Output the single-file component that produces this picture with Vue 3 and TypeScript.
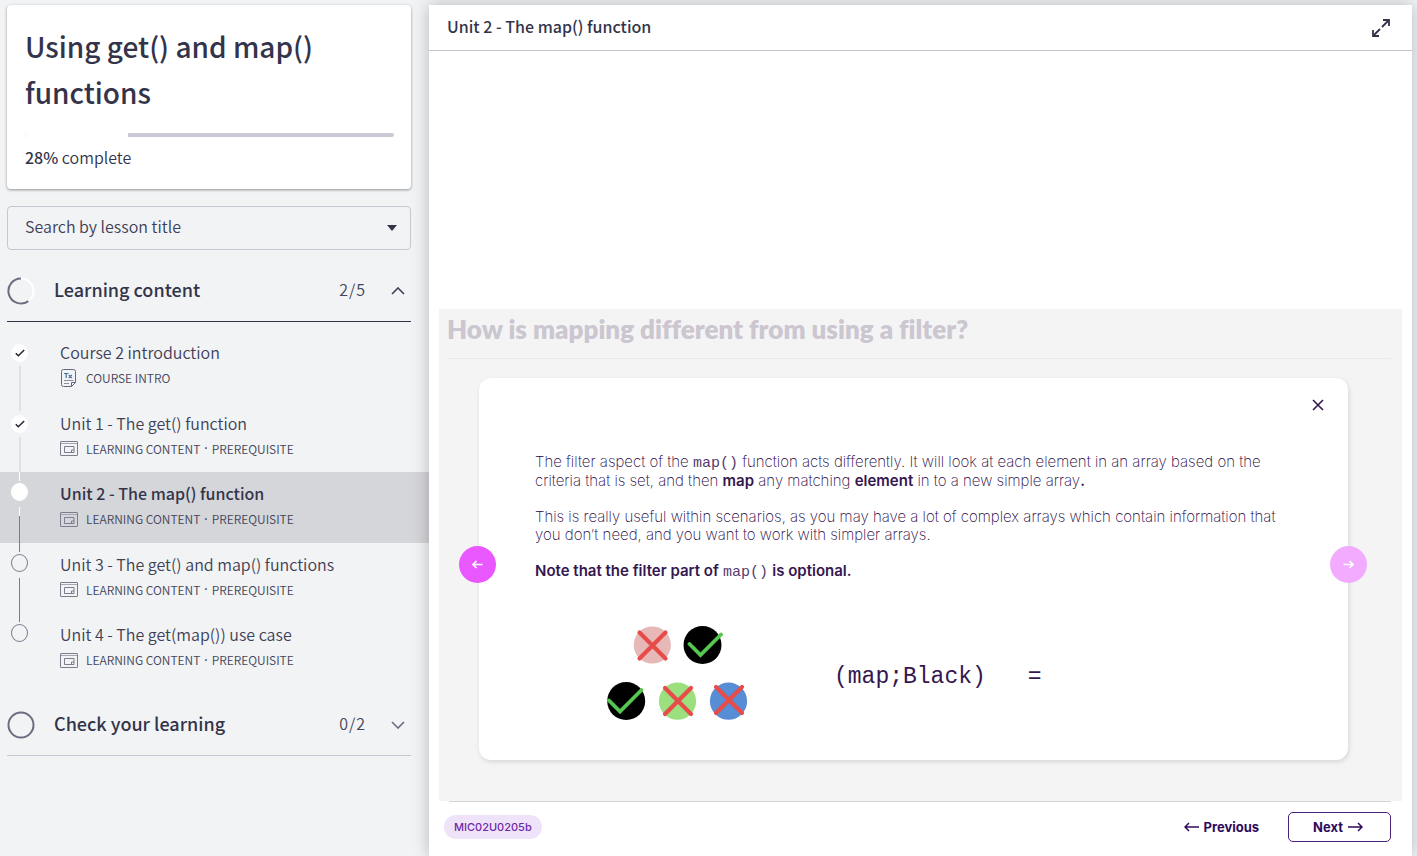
<script setup lang="ts">
import { ref } from 'vue'

type Status = 'done' | 'current' | 'todo'

interface Lesson {
  title: string
  meta: string[]
  icon: 'text' | 'slides'
  status: Status
}

const progress = ref(28)
const search = ref('')

const lessons: Lesson[] = [
  { title: 'Course 2 introduction', meta: ['COURSE INTRO'], icon: 'text', status: 'done' },
  { title: 'Unit 1 - The get() function', meta: ['LEARNING CONTENT', 'PREREQUISITE'], icon: 'slides', status: 'done' },
  { title: 'Unit 2 - The map() function', meta: ['LEARNING CONTENT', 'PREREQUISITE'], icon: 'slides', status: 'current' },
  { title: 'Unit 3 - The get() and map() functions', meta: ['LEARNING CONTENT', 'PREREQUISITE'], icon: 'slides', status: 'todo' },
  { title: 'Unit 4 - The get(map()) use case', meta: ['LEARNING CONTENT', 'PREREQUISITE'], icon: 'slides', status: 'todo' },
]
</script>

<template>
  <div class="page">
    <aside class="sidebar">
      <section class="course">
        <h1>Using get() and map() functions</h1>
        <div class="bar" role="progressbar" aria-label="Course progress" :aria-valuenow="progress">
          <div class="bar-done" :style="{ width: progress + '%' }"></div>
        </div>
        <p class="complete"><strong>{{ progress }}%</strong> complete</p>
      </section>

      <div class="search">
        <select v-model="search" aria-label="Search by lesson title">
          <option value="">Search by lesson title</option>
          <option v-for="l in lessons" :key="l.title" :value="l.title">{{ l.title }}</option>
        </select>
        <svg class="caret" width="10" height="6" viewBox="0 0 10 6"><path d="M0 0h10L5 6z" fill="#33344a" /></svg>
      </div>

      <button type="button" class="section open" aria-expanded="true">
        <svg class="ring" width="28" height="28" viewBox="0 0 28 28" fill="none" stroke-width="2">
          <circle cx="14" cy="14" r="12.500" stroke="#fff" />
          <path d="M14 1.500A12.500 12.500 0 1 0 21.300 24.100" stroke="#6c6c80" />
        </svg>
        <span class="section-name">Learning content</span>
        <span class="count">2/5</span>
        <svg width="14" height="8" viewBox="0 0 14 8" fill="none" stroke="#3f4055" stroke-width="1.600"><path d="M1 7l6-6 6 6" /></svg>
      </button>

      <ul class="lessons">
        <li v-for="(l, i) in lessons" :key="l.title" :class="['lesson', l.status]">
          <div class="rail">
            <span :class="['seg', 'before', { hidden: i === 0 }]"></span>
            <span class="dot">
              <svg v-if="l.status === 'done'" width="10" height="8" viewBox="0 0 10 8" fill="none" stroke="#222230" stroke-width="1.500"><path d="M.8 4.200l2.500 2.500L9.200 1" /></svg>
            </span>
            <span :class="['seg', 'after', { hidden: i === lessons.length - 1 }]"></span>
          </div>
          <div class="lesson-text">
            <a href="#" class="lesson-title">{{ l.title }}</a>
            <div class="meta">
              <svg v-if="l.icon === 'text'" width="18" height="18" viewBox="0 0 18 18" fill="none" stroke="#66677c">
                <path d="M3.500.5h10a2 2 0 0 1 2 2v11l-4 4h-8a2 2 0 0 1-2-2v-13a2 2 0 0 1 2-2z" />
                <path d="M15.500 13.500h-4v4" />
                <path d="M4 11.500h9.500M4 14.500h5" stroke="#8e8f9f" />
                <path d="M4 4.500h4.500M6.200 4.500V9M8.800 6l3 3M11.800 6l-3 3" stroke="#46719c" stroke-width="1.200" />
              </svg>
              <svg v-else width="18" height="15" viewBox="0 0 18 15" fill="none" stroke="#7b7c8e">
                <rect x=".5" y=".5" width="17" height="14" rx=".5" />
                <path d="M1 2.500h16" stroke="#a5a6b2" />
                <path d="M4.500 5.500h9.500v6h-9.500z" />
                <path d="M14 9h-2.500v2.500" />
              </svg>
              <template v-for="(m, k) in l.meta" :key="m">
                <span v-if="k > 0" class="sep">·</span>
                <span class="kind">{{ m }}</span>
              </template>
            </div>
          </div>
        </li>
      </ul>

      <button type="button" class="section" aria-expanded="false">
        <svg class="ring" width="28" height="28" viewBox="0 0 28 28" fill="none" stroke="#6c6c80" stroke-width="2"><circle cx="14" cy="14" r="12.500" /></svg>
        <span class="section-name">Check your learning</span>
        <span class="count">0/2</span>
        <svg width="14" height="8" viewBox="0 0 14 8" fill="none" stroke="#6c6c80" stroke-width="1.600"><path d="M1 1l6 6 6-6" /></svg>
      </button>
    </aside>

    <main class="viewer">
      <header class="topbar">
        <h2>Unit 2 - The map() function</h2>
        <button type="button" class="plain" aria-label="Full screen">
          <svg width="18" height="18" viewBox="0 0 18 18" fill="none" stroke="#33344a" stroke-width="1.800">
            <path d="M10 8l6.500-6.500M11 1h6v6M8 10l-6.500 6.500M1 11v6h6" />
          </svg>
        </button>
      </header>

      <div class="stage">
        <section class="slide">
          <h3>How is mapping different from using a filter?</h3>
          <article class="panel">
            <button type="button" class="round prev" aria-label="Previous step">
              <svg width="11" height="9" viewBox="0 0 11 9" fill="none" stroke="#fff" stroke-width="1.700"><path d="M10.500 4.500H1M4.500 1L1 4.500 4.500 8" /></svg>
            </button>
            <button type="button" class="round next" aria-label="Next step">
              <svg width="11" height="9" viewBox="0 0 11 9" fill="none" stroke="#fff" stroke-width="1.700"><path d="M.5 4.500H10M6.500 1L10 4.500 6.500 8" /></svg>
            </button>
            <div class="panel-head">
              <button type="button" class="plain" aria-label="Close">
                <svg width="12" height="12" viewBox="0 0 12 12" stroke="#35174f" stroke-width="1.600"><path d="M1 1l10 10M11 1L1 11" /></svg>
              </button>
            </div>
            <div class="copy">
              <p>The filter aspect of the <code>map()</code> function acts differently. It will look at each element in an array based on the criteria that is set, and then <b>map</b> any matching <b>element</b> in to a new simple array<b>.</b></p>
              <p>This is really useful within scenarios, as you may have a lot of complex arrays which contain information that you don’t need, and you want to work with simpler arrays.</p>
              <p><b>Note that the filter part of</b> <code>map()</code> <b>is optional.</b></p>
            </div>
            <div class="formula">
              <svg width="142" height="96" viewBox="0 0 142 96" fill="none" stroke-width="4.200" stroke-linecap="round" role="img" aria-label="Coloured circles, only the black ones kept">
                <circle cx="45.300" cy="19" r="18.600" fill="#e7b8b8" />
                <circle cx="95.500" cy="19" r="19" fill="#000" />
                <circle cx="19.200" cy="75" r="19" fill="#000" />
                <circle cx="70.500" cy="75.200" r="18.600" fill="#9bdf7e" />
                <circle cx="121.500" cy="75.200" r="18.600" fill="#568dd4" />
                <g stroke="#e84c4a">
                  <path d="M32.500 6.500l26 26M58.500 6.500l-26 26" />
                  <path d="M58 62l26 26M84 62L58 88" />
                  <path d="M109 61l26 26M135 61l-26 26" />
                </g>
                <path d="M82.500 18l11 11L114 8.500M2 74.500l11 11L34.500 64" stroke="#55c84f" stroke-width="3.800" />
              </svg>
              <span class="expr">(map;Black)</span>
              <span class="expr">=</span>
            </div>
          </article>
        </section>
      </div>

      <footer class="bottom">
        <span class="tag">MIC02U0205b</span>
        <nav class="nav">
          <button type="button" class="step">
            <svg width="15" height="10" viewBox="0 0 15 10" fill="none" stroke="#2f0a5c" stroke-width="1.500"><path d="M15 5H1M5 1L1 5l4 4" /></svg>
            Previous
          </button>
          <button type="button" class="step boxed">
            Next
            <svg width="15" height="10" viewBox="0 0 15 10" fill="none" stroke="#2f0a5c" stroke-width="1.500"><path d="M0 5h14M10 1l4 4-4 4" /></svg>
          </button>
        </nav>
      </footer>
    </main>
  </div>
</template>

<style>
body {
  margin: 0;
  background: #f1f3f5;
}
</style>

<style scoped>
* {
  box-sizing: border-box;
}
.page {
  display: grid;
  grid-template-columns: 429px minmax(0, 1fr);
  min-height: 100vh;
  padding: 5px 5px 0 0;
  overflow: hidden;
  color: #33344a;
  font-family: "Noto Sans CJK SC", "Noto Sans", sans-serif;
  font-size: 16px;
  font-weight: 350;
}
h1, h2, h3, p, ul {
  margin: 0;
  padding: 0;
}
button {
  border: 0;
  padding: 0;
  background: none;
  color: inherit;
  font: inherit;
  cursor: pointer;
}
svg {
  display: block;
  flex: none;
}

.course {
  margin: 0 18px 0 7px;
  padding: 18px 17px 20px 18px;
  border-radius: 4px;
  background: #fff;
  box-shadow: 0 1px 3px rgba(0, 0, 0, 0.4);
}
h1 {
  font-size: 28px;
  font-weight: 500;
  line-height: 46px;
}
.bar {
  height: 4px;
  margin-top: 18px;
  border-radius: 2px;
  background: #cacad5;
  overflow: hidden;
}
.bar-done {
  height: 4px;
  background: #fff;
}
.complete {
  margin-top: 8px;
  line-height: 24px;
}
.complete strong {
  font-weight: 500;
}

.search {
  position: relative;
  margin: 17px 18px 10px 7px;
}
.search select {
  display: block;
  width: 100%;
  height: 44px;
  padding: 0 17px 4px;
  border: 1px solid #c6c7d2;
  border-radius: 4px;
  appearance: none;
  background: transparent;
  color: #3f4055;
  font: inherit;
}
.caret {
  position: absolute;
  top: 19px;
  right: 14px;
}

.section {
  display: flex;
  align-items: center;
  width: 404px;
  height: 62px;
  margin-left: 7px;
  border-bottom: 1px solid #c6c7d2;
  text-align: left;
}
.section.open {
  border-color: #33344a;
}
.section > svg:last-child {
  margin-right: 6px;
}
.section-name {
  flex: 1;
  margin-left: 19px;
  padding-bottom: 3px;
  font-size: 18px;
  font-weight: 500;
}
.count {
  margin-right: 25px;
  padding-bottom: 3px;
  color: #44455a;
  letter-spacing: 1px;
}

.lessons {
  display: grid;
  grid-template-rows: repeat(5, 1fr);
  height: 353px;
  margin: 9px 0 10px;
  list-style: none;
}
.lesson {
  display: flex;
  padding-left: 10px;
}
.lesson.current {
  background: #d5d6da;
}
.rail {
  display: flex;
  flex-direction: column;
  align-items: center;
  width: 19px;
}
.seg {
  width: 1px;
  background: #7b7c8e;
}
.before {
  height: 9px;
}
.after {
  flex: 1;
}
.done .seg {
  width: 2px;
  background: #e0e1e4;
}
.current .before {
  background: #fff;
}
.current .after {
  background: linear-gradient(#fff 9px, #7b7c8e 9px);
}
.seg.hidden {
  visibility: hidden;
}
.dot {
  display: flex;
  align-items: center;
  justify-content: center;
  width: 17px;
  height: 18px;
  margin: 2px 0 6px;
  border: 1px solid #7b7c8e;
  border-radius: 50%;
}
.done .dot,
.current .dot {
  border-color: #fff;
  background: #fff;
}
.done .dot {
  margin: 4px 0;
}
.lesson-text {
  padding: 9px 0 0 31px;
}
.lesson-title {
  display: block;
  color: #3f4055;
  line-height: 24px;
  text-decoration: none;
}
.current .lesson-title {
  color: #33344a;
  font-weight: 500;
}
.meta {
  display: flex;
  align-items: center;
  height: 18px;
  margin-top: 5px;
  color: #44455a;
  font-size: 12px;
}
.meta svg {
  margin-right: 8px;
}
.kind {
  padding-bottom: 1px;
}
.sep {
  margin: 0 4px;
  font-family: "Noto Sans", sans-serif;
  font-weight: 500;
}

.viewer {
  display: flex;
  flex-direction: column;
  background: #fff;
  box-shadow: 0 0 16px rgba(0, 0, 0, 0.25);
}
.topbar {
  display: flex;
  align-items: center;
  justify-content: space-between;
  height: 46px;
  padding: 0 22px 0 18px;
  border-bottom: 1px solid #c6c7d2;
}
.topbar h2 {
  padding-bottom: 3px;
  font-size: 16px;
  font-weight: 500;
}
.stage {
  display: flex;
  flex: 1;
  flex-direction: column;
  justify-content: flex-end;
  margin: 0 10px;
  font-family: Inter, "Open Sans", sans-serif;
}
.slide {
  padding: 0 11px 41px 8px;
  background: #f4f4f4;
}
h3 {
  height: 50px;
  border-bottom: 1px solid #eaeaea;
  color: #cbc6d0;
  font-family: Lato, sans-serif;
  font-size: 26px;
  font-variant-ligatures: none;
  font-weight: 800;
  line-height: 40px;
}
.panel {
  position: relative;
  min-height: 382px;
  margin: 19px 43px 0 32px;
  border-radius: 12px;
  background: #fff;
  box-shadow: 1px 2px 5px rgba(0, 0, 0, 0.12);
  color: #35174f;
}
.round {
  position: absolute;
  top: 168px;
  display: flex;
  align-items: center;
  justify-content: center;
  width: 37px;
  height: 37px;
  border-radius: 50%;
}
.prev {
  left: -20px;
  background: #e857ff;
}
.next {
  right: -19px;
  background: #f3abff;
}
.panel-head {
  display: flex;
  justify-content: flex-end;
  padding: 21px 24px;
}
.copy {
  padding: 21px 56px 0;
  color: #26053f;
  font-size: 15px;
  font-weight: 220;
  line-height: 18px;
}
.copy p + p {
  margin-top: 18px;
}
.copy b {
  color: #35174f;
  font-weight: 600;
}
code,
.expr {
  font-family: "Liberation Mono", monospace;
  font-weight: 400;
}
code {
  color: #553d6b;
  font-size: 15px;
  line-height: 16px;
}
.formula {
  display: flex;
  align-items: center;
  margin: 45px 0 0 128px;
}
.formula svg {
  margin-right: 85px;
}
.expr {
  margin-right: 42px;
  padding-top: 6px;
  font-size: 23px;
}

.bottom {
  display: flex;
  align-items: center;
  justify-content: space-between;
  height: 55px;
  margin: 0 21px 0 20px;
  padding-bottom: 4px;
  border-top: 1px solid #d5d5d8;
  font-family: Inter, "Open Sans", sans-serif;
}
.tag {
  margin-left: -5px;
  padding: 0 10px;
  border-radius: 12px;
  background: #efe3fa;
  color: #7028a8;
  font-size: 11px;
  font-weight: 500;
  line-height: 24px;
}
.nav {
  display: flex;
  gap: 29px;
}
.step {
  display: flex;
  align-items: center;
  gap: 5px;
  height: 30px;
  color: #2f0a5c;
  font-size: 13px;
  font-weight: 700;
}
.boxed {
  padding: 0 27px 0 24px;
  border: 1px solid #4b2178;
  border-radius: 5px;
}
</style>
